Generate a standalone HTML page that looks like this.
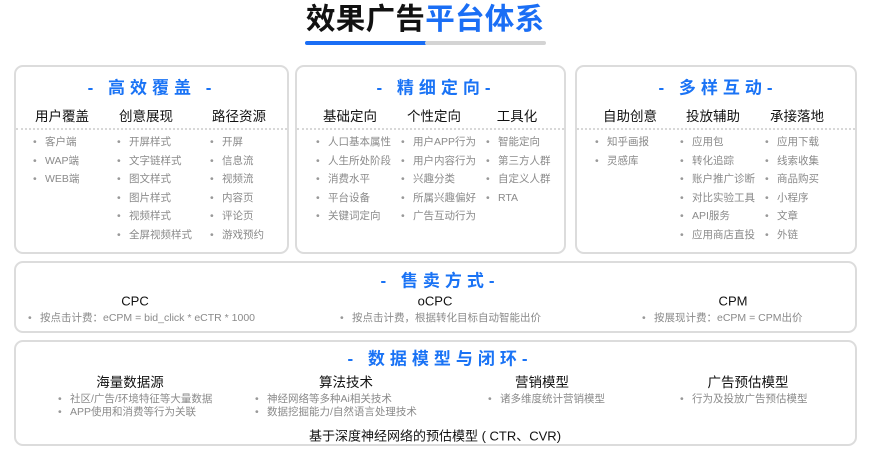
<!DOCTYPE html>
<html><head><meta charset="utf-8"><style>
*{margin:0;padding:0;box-sizing:border-box}
body{width:870px;height:472px;background:#fff;position:relative;overflow:hidden;font-family:"Liberation Sans","Noto Sans CJK SC",sans-serif}
.a{position:absolute;white-space:nowrap}
.box{position:absolute;border:2px solid #dcdcdc;border-radius:9px;background:#fff}
.h{position:absolute;color:#1a73f5;font-weight:bold;font-size:17px;letter-spacing:5px;transform:translate(-50%,-50%);white-space:nowrap}
.s{position:absolute;font-size:13.5px;color:#111;transform:translate(-50%,-50%);white-space:nowrap}
.i{position:absolute;font-size:10.5px;color:#8a8a8a;white-space:nowrap;line-height:18.5px}
.i div::before{content:"•";position:absolute;margin-left:-12px;color:#999}
.dot{position:absolute;height:0;border-top:2px dotted #d8d8d8}
</style></head><body>
<div class="a" style="left:306px;top:2px;font-size:29.5px;font-weight:bold;line-height:36px;letter-spacing:0.3px"><span style="color:#111">效果广告</span><span style="color:#1a6ef5">平台体系</span></div>
<div class="a" style="left:305px;top:41px;width:122px;height:4px;background:#1a6ef5;border-radius:2px"></div>
<div class="a" style="left:425px;top:41px;width:121px;height:4px;background:#d4d4d4;border-radius:2px"></div>

<div class="box" style="left:14px;top:65px;width:275px;height:189px"></div>
<div class="box" style="left:295px;top:65px;width:271px;height:189px"></div>
<div class="box" style="left:575px;top:65px;width:282px;height:189px"></div>
<div class="dot" style="left:16px;top:128px;width:271px"></div>
<div class="dot" style="left:297px;top:128px;width:267px"></div>
<div class="dot" style="left:577px;top:128px;width:278px"></div>

<div class="h" style="left:152px;top:86px">- 高效覆盖 -</div>
<div class="h" style="left:436px;top:86px">- 精细定向-</div>
<div class="h" style="left:718px;top:86px">- 多样互动-</div>

<div class="s" style="left:62px;top:115px">用户覆盖</div>
<div class="s" style="left:146px;top:115px">创意展现</div>
<div class="s" style="left:239px;top:115px">路径资源</div>
<div class="s" style="left:350px;top:115px">基础定向</div>
<div class="s" style="left:434px;top:115px">个性定向</div>
<div class="s" style="left:517px;top:115px">工具化</div>
<div class="s" style="left:630px;top:115px">自助创意</div>
<div class="s" style="left:713px;top:115px">投放辅助</div>
<div class="s" style="left:797px;top:115px">承接落地</div>

<div class="i" style="left:45px;top:133px"><div>客户端</div><div>WAP端</div><div>WEB端</div></div>
<div class="i" style="left:129px;top:133px"><div>开屏样式</div><div>文字链样式</div><div>图文样式</div><div>图片样式</div><div>视频样式</div><div>全屏视频样式</div></div>
<div class="i" style="left:222px;top:133px"><div>开屏</div><div>信息流</div><div>视频流</div><div>内容页</div><div>评论页</div><div>游戏预约</div></div>
<div class="i" style="left:328px;top:133px"><div>人口基本属性</div><div>人生所处阶段</div><div>消费水平</div><div>平台设备</div><div>关键词定向</div></div>
<div class="i" style="left:413px;top:133px"><div>用户APP行为</div><div>用户内容行为</div><div>兴趣分类</div><div>所属兴趣偏好</div><div>广告互动行为</div></div>
<div class="i" style="left:498px;top:133px"><div>智能定向</div><div>第三方人群</div><div>自定义人群</div><div>RTA</div></div>
<div class="i" style="left:607px;top:133px"><div>知乎画报</div><div>灵感库</div></div>
<div class="i" style="left:692px;top:133px"><div>应用包</div><div>转化追踪</div><div>账户推广诊断</div><div>对比实验工具</div><div>API服务</div><div>应用商店直投</div></div>
<div class="i" style="left:777px;top:133px"><div>应用下载</div><div>线索收集</div><div>商品购买</div><div>小程序</div><div>文章</div><div>外链</div></div>

<div class="box" style="left:14px;top:261px;width:843px;height:72px"></div>
<div class="h" style="left:440px;top:279px">- 售卖方式-</div>
<div class="s" style="left:135px;top:301px;font-size:13px">CPC</div>
<div class="s" style="left:435px;top:301px;font-size:13px">oCPC</div>
<div class="s" style="left:733px;top:301px;font-size:13px">CPM</div>
<div class="i" style="left:40px;top:309px"><div>按点击计费：eCPM = bid_click * eCTR * 1000</div></div>
<div class="i" style="left:352px;top:309px"><div>按点击计费，根据转化目标自动智能出价</div></div>
<div class="i" style="left:654px;top:309px"><div>按展现计费：eCPM = CPM出价</div></div>

<div class="box" style="left:14px;top:340px;width:843px;height:106px"></div>
<div class="h" style="left:440px;top:357px">- 数据模型与闭环-</div>
<div class="s" style="left:130px;top:381px">海量数据源</div>
<div class="s" style="left:346px;top:381px">算法技术</div>
<div class="s" style="left:542px;top:381px">营销模型</div>
<div class="s" style="left:748px;top:381px">广告预估模型</div>
<div class="i" style="left:70px;top:393px;line-height:13px"><div>社区/广告/环境特征等大量数据</div><div>APP使用和消费等行为关联</div></div>
<div class="i" style="left:267px;top:393px;line-height:13px"><div>神经网络等多种Ai相关技术</div><div>数据挖掘能力/自然语言处理技术</div></div>
<div class="i" style="left:500px;top:393px;line-height:13px"><div>诸多维度统计营销模型</div></div>
<div class="i" style="left:692px;top:393px;line-height:13px"><div>行为及投放广告预估模型</div></div>
<div class="s" style="left:435px;top:435px;font-size:13px">基于深度神经网络的预估模型 ( CTR、CVR)</div>
</body></html>
